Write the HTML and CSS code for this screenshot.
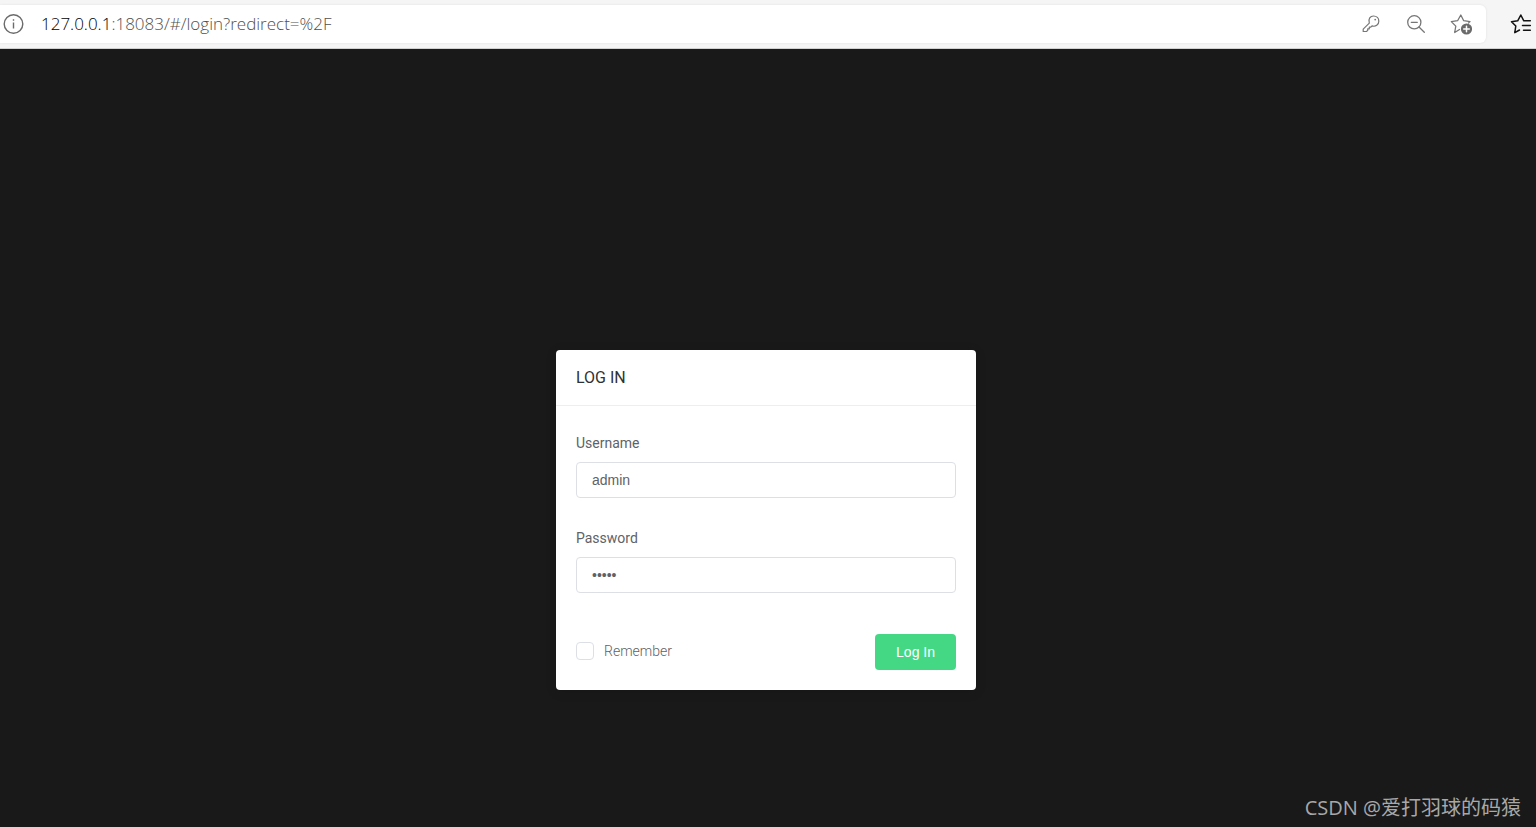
FILE: index.html
```
<!DOCTYPE html>
<html lang="en">
<head>
    <meta charset="UTF-8">
    <meta name="viewport" content="width=device-width, initial-scale=1.0">
    <title>Log In</title>
    <link rel="stylesheet" href="styles.css">
</head>
<body>
    <header class="toolbar">
        <div class="address-bar">
            <button class="icon-button" type="button" aria-label="Site information">
                <svg width="22" height="22" viewBox="0 0 22 22" fill="none" stroke="#6b6b6b" stroke-width="1.4">
                    <circle cx="11.5" cy="11" r="9.3"/>
                    <path d="M11.5 9.5v6M11.5 6.2v1.6"/>
                </svg>
            </button>
            <div class="url"><span class="host">127.0.0.1</span>:18083/#/login?redirect=%2F</div>
            <div class="actions">
                <button class="icon-button" type="button" aria-label="Saved passwords">
                    <svg width="22" height="22" viewBox="0 0 22 22" fill="none" stroke="#767676" stroke-width="1.2" stroke-linejoin="round">
                        <path d="M9.3 10.1C8 5.8 10.3 3 13.5 3c3.2 0 5.3 2.3 5.3 5.2 0 3.6-3.2 5.9-6.8 4.7l-1.2 1.2H9.3v1.7H7.7v1.6l-1.2 1.1H3.2v-2.3z"/>
                        <circle cx="15.2" cy="6.6" r="0.9" fill="#767676" stroke="none"/>
                    </svg>
                </button>
                <button class="icon-button" type="button" aria-label="Zoom out">
                    <svg width="22" height="22" viewBox="0 0 22 22" fill="none" stroke="#767676" stroke-width="1.3" stroke-linecap="round">
                        <circle cx="9.3" cy="9.3" r="6.6"/>
                        <path d="M6.3 9.3h6M14 14l5.3 5.3"/>
                    </svg>
                </button>
                <button class="icon-button" type="button" aria-label="Add to favorites">
                    <svg width="22" height="22" viewBox="0 0 22 22" fill="none" stroke="#767676" stroke-width="1.3" stroke-linejoin="round" stroke-linecap="round">
                        <path d="M9.5 16.5l-4.8 3 1.1-6.4L1.3 8.600l6.3-.9L10.800 2l2.900 5.700 6.300.9-1.500 1.400"/>
                        <circle cx="16.5" cy="16" r="5.6" fill="#6b6b6b" stroke="none"/>
                        <path d="M16.5 13.2v5.6M13.7 16h5.6" stroke="#fff" stroke-width="1.5"/>
                    </svg>
                </button>
            </div>
        </div>
        <button class="icon-button favorites" type="button" aria-label="Favorites">
            <svg width="22" height="22" viewBox="0 0 22 22" fill="none" stroke="#111" stroke-width="1.5" stroke-linejoin="round" stroke-linecap="round">
                <path d="M9.5 17l-4.7 2.7 1-6.7L1.5 8.7l6.2-.9L10.800 2l3 5.800h6.500M12.500 12.500h7.800M13.500 17.200h6.800"/>
            </svg>
        </button>
    </header>

    <main class="login-page">
        <form class="card">
            <h1 class="card-header">LOG IN</h1>
            <div class="card-body">
                <div class="form-item">
                    <label for="username">Username</label>
                    <input type="text" id="username" value="admin">
                </div>
                <div class="form-item">
                    <label for="password">Password</label>
                    <input type="password" id="password" value="admin">
                </div>
                <div class="form-footer">
                    <label class="remember">
                        <input type="checkbox">
                        Remember
                    </label>
                    <button class="login-button" type="button">Log In</button>
                </div>
            </div>
        </form>
        <div class="watermark">CSDN @爱打羽球的码猿</div>
    </main>
</body>
</html>
```
FILE: styles.css
```
* {
    box-sizing: border-box;
}

body {
    display: flex;
    flex-direction: column;
    min-height: 100vh;
    margin: 0;
    background-color: #191919;
    font-family: Roboto, sans-serif;
    font-size: 14px;
    color: #606266;
}

.toolbar {
    display: flex;
    align-items: center;
    padding: 5px 4px 5px 0;
    background-color: #f5f5f5;
    border-bottom: 1px solid #d0d0d0;
}

.address-bar {
    display: flex;
    flex: 1;
    align-items: center;
    height: 38px;
    padding: 0 14px 0 2px;
    background-color: #fff;
    border-radius: 0 6px 6px 0;
    box-shadow: 0 0 3px rgba(0, 0, 0, 0.08);
}

.icon-button {
    display: flex;
    padding: 0;
    border: none;
    background: none;
    cursor: pointer;
}

.url {
    flex: 1;
    margin-left: 17px;
    font-family: "Open Sans", sans-serif;
    font-size: 17px;
    font-weight: 300;
    line-height: 24px;
    color: #505050;
}

.host {
    color: #000;
}

.actions {
    display: flex;
    gap: 23px;
}

.favorites {
    margin-left: 24px;
}

.login-page {
    position: relative;
    display: flex;
    flex: 1;
    justify-content: center;
    align-items: center;
    padding: 164px 4px 0 0;
}

.card {
    width: 420px;
    background-color: #fff;
    border-radius: 4px;
    box-shadow: 0 2px 12px rgba(0, 0, 0, 0.1);
}

.card-header {
    margin: 0;
    padding: 16px 20px 15px;
    border-bottom: 1px solid #ebeef5;
    font-size: 16px;
    font-weight: 400;
    line-height: 24px;
    color: #303133;
}

.card-body {
    padding: 26px 20px 20px;
}

.form-item {
    display: flex;
    flex-direction: column;
    gap: 8px;
    margin-bottom: 29px;
    line-height: 22px;
}

.form-item input {
    width: 100%;
    height: 36px;
    padding: 0 15px;
    border: 1px solid #dcdfe6;
    border-radius: 4px;
    outline: none;
    font-family: "Liberation Sans", Arial, sans-serif;
    font-size: 14px;
    color: #606266;
}

.form-footer {
    display: flex;
    justify-content: space-between;
    padding-top: 12px;
}

.remember {
    display: flex;
    align-items: center;
    gap: 10px;
    height: 34px;
    font-weight: 300;
}

.remember input {
    appearance: none;
    width: 18px;
    height: 18px;
    margin: 0;
    border: 1px solid #dcdfe6;
    border-radius: 4px;
    background-color: #fff;
}

.remember input:checked {
    background-color: #44d885;
}

.login-button {
    height: 36px;
    padding: 0 21px;
    border: none;
    border-radius: 4px;
    background-color: #44d885;
    font-family: "Liberation Sans", Arial, sans-serif;
    font-size: 14px;
    color: #fff;
    cursor: pointer;
}

.login-button:hover {
    background-color: #69e09d;
}

.watermark {
    position: absolute;
    right: 15px;
    bottom: 6px;
    font-family: "Open Sans", "Noto Sans CJK SC", sans-serif;
    font-size: 20px;
    line-height: 26px;
    color: #a8a8a8;
}
```
